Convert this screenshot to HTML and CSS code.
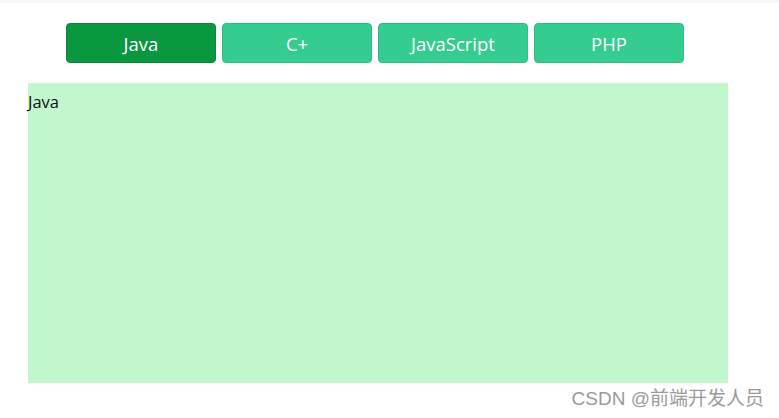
FILE: index.html
```html
<!DOCTYPE html>
<html>
<head>
<meta charset="utf-8">
<link rel="stylesheet" href="styles.css">
</head>
<body>
<div class="topbar"></div>
<div class="page">
  <div class="tabs">
    <button class="tab active">Java</button>
    <button class="tab">C+</button>
    <button class="tab">JavaScript</button>
    <button class="tab">PHP</button>
  </div>
  <div class="panel">Java</div>
</div>
<div class="watermark">CSDN @前端开发人员</div>
</body>
</html>
```

FILE: styles.css
```css
html, body {
  margin: 0;
  padding: 0;
  background: #ffffff;
  font-family: "Open Sans", "Noto Sans", "Noto Sans CJK SC", sans-serif;
}
.topbar {
  height: 3px;
  background: #f7f7f7;
}
.page {
  padding-left: 28px;
  padding-top: 20px;
}
.tabs {
  display: flex;
  gap: 6px;
  margin-left: 38px;
}
.tab {
  width: 150px;
  height: 40px;
  box-sizing: border-box;
  border: 1px solid #2cbf83;
  border-radius: 4px;
  background: #35cc8f;
  color: #ffffff;
  font-family: "Open Sans", "Noto Sans", sans-serif;
  font-size: 18.5px;
  padding: 0;
  display: flex;
  align-items: center;
  justify-content: center;
}
.tab.active {
  background: #09983f;
  border-color: #078a38;
}
.panel {
  margin-top: 20px;
  width: 700px;
  height: 300px;
  background: #c0f7cc;
  color: #111;
  font-size: 16.5px;
  line-height: 22px;
  padding-top: 8px;
  box-sizing: border-box;
}
.watermark {
  position: absolute;
  right: 15px;
  top: 388px;
  color: #9a9a9a;
  font-family: "Liberation Sans", "Noto Sans CJK SC", sans-serif;
  font-size: 19px;
  line-height: 22px;
}
```
